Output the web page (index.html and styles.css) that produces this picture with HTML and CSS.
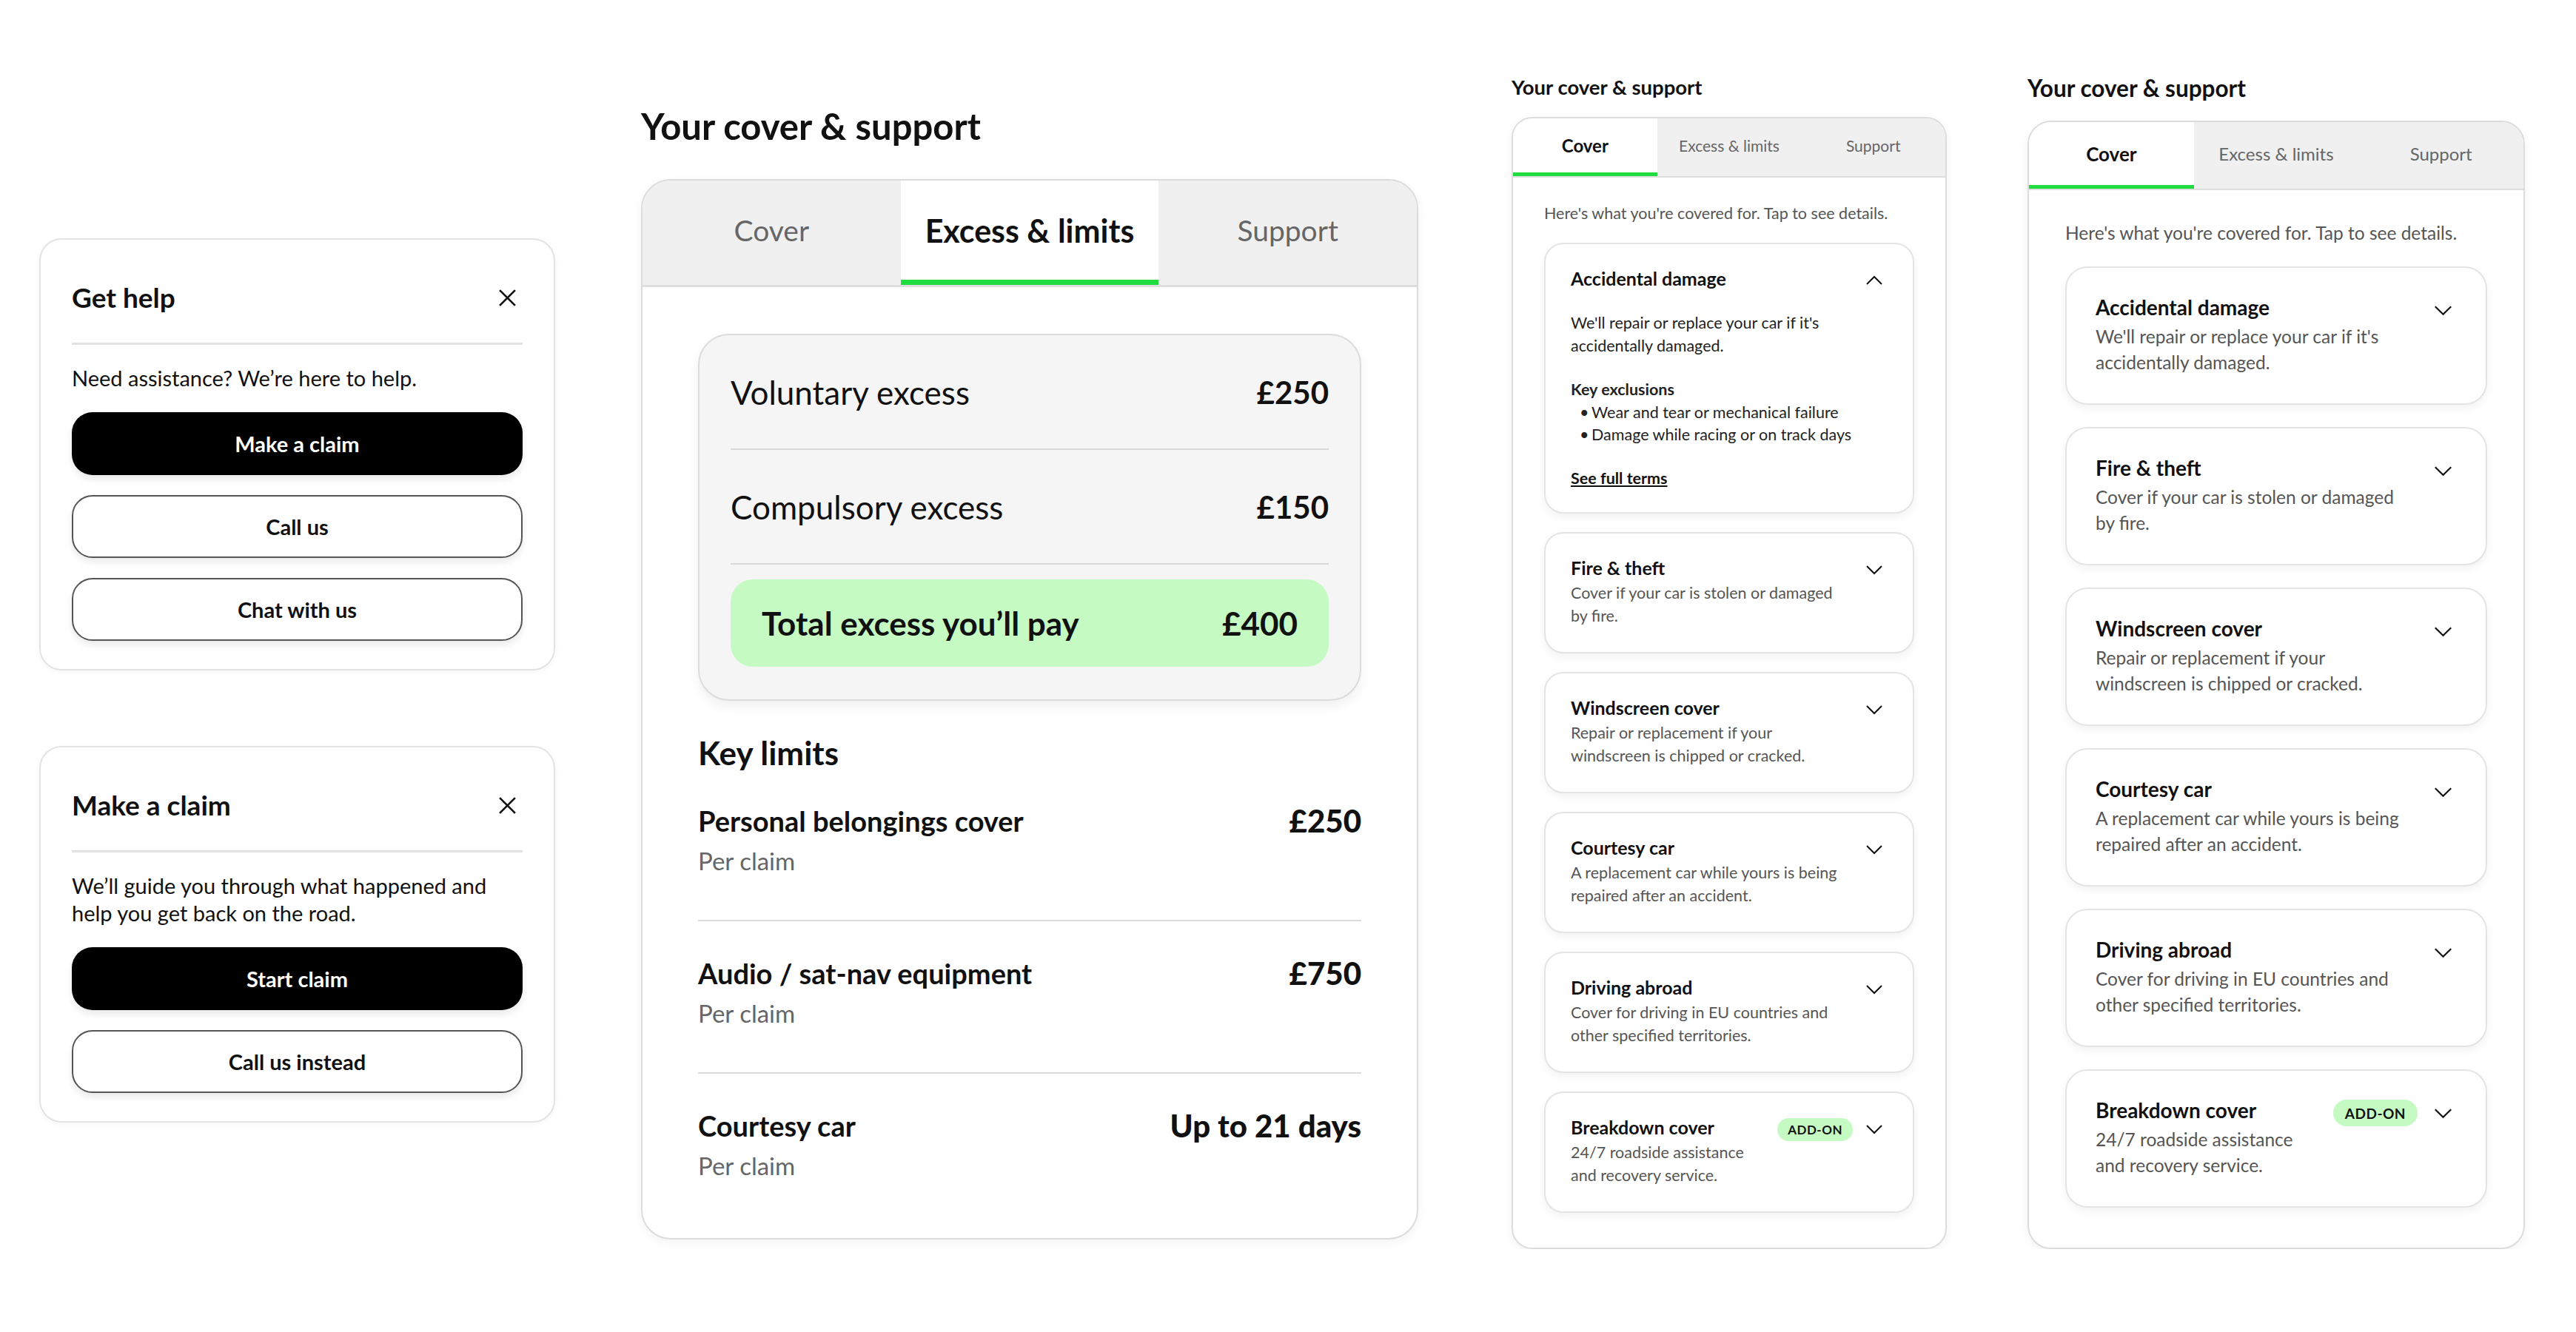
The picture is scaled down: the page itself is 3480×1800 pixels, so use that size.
FILE: index.html
```html
<!DOCTYPE html>
<html lang="en">
<head>
    <meta charset="UTF-8">
    <meta name="viewport" content="width=device-width, initial-scale=1.0">
    <title>Your cover &amp; support</title>
    <link rel="stylesheet" href="styles.css">
</head>
<body>
<div class="board">

    <!-- help sheets -->
    <div class="col-help">
        <div class="sheet">
            <div class="sheet-head">
                <h2 class="sheet-title">Get help</h2>
                <svg class="close" viewBox="0 0 24 24"><path d="M2 2L22 22M22 2L2 22"/></svg>
            </div>
            <p class="sheet-text">Need assistance? We’re here to help.</p>
            <div class="btn btn-dark">Make a claim</div>
            <div class="btn btn-line">Call us</div>
            <div class="btn btn-line">Chat with us</div>
        </div>

        <div class="sheet">
            <div class="sheet-head">
                <h2 class="sheet-title">Make a claim</h2>
                <svg class="close" viewBox="0 0 24 24"><path d="M2 2L22 22M22 2L2 22"/></svg>
            </div>
            <p class="sheet-text">We’ll guide you through what happened and help you get back on the road.</p>
            <div class="btn btn-dark">Start claim</div>
            <div class="btn btn-line">Call us instead</div>
        </div>
    </div>

    <!-- excess & limits, large -->
    <div class="col-main cover-lg">
        <h1 class="page-title">Your cover &amp; support</h1>
        <div class="cover-card">
            <div class="tabs">
                <div class="tab">Cover</div>
                <div class="tab active">Excess &amp; limits</div>
                <div class="tab">Support</div>
            </div>
            <div class="cover-body">
                <div class="excess-box">
                    <div class="excess-row"><span>Voluntary excess</span><b>£250</b></div>
                    <div class="excess-row"><span>Compulsory excess</span><b>£150</b></div>
                    <div class="excess-total"><span>Total excess you’ll pay</span><span>£400</span></div>
                </div>

                <h3 class="limits-title">Key limits</h3>
                <div class="limit-row">
                    <div class="limit-top"><span>Personal belongings cover</span><b>£250</b></div>
                    <div class="limit-sub">Per claim</div>
                </div>
                <div class="limit-row">
                    <div class="limit-top"><span>Audio / sat-nav equipment</span><b>£750</b></div>
                    <div class="limit-sub">Per claim</div>
                </div>
                <div class="limit-row">
                    <div class="limit-top"><span>Courtesy car</span><b>Up to 21 days</b></div>
                    <div class="limit-sub">Per claim</div>
                </div>
            </div>
        </div>
    </div>

    <!-- cover tab, small -->
    <div class="col-sm cover-sm">
        <h1 class="page-title">Your cover &amp; support</h1>
        <div class="cover-card">
            <div class="tabs">
                <div class="tab active">Cover</div>
                <div class="tab">Excess &amp; limits</div>
                <div class="tab">Support</div>
            </div>
            <div class="cover-body">
                <p class="intro">Here's what you're covered for. Tap to see details.</p>
                <div class="items">
                    <div class="item open">
                        <div class="item-main">
                            <div class="item-title">Accidental damage</div>
                        </div>
                        <svg class="chev chev-up" viewBox="0 0 24 14"><path d="M2 12L12 2L22 12"/></svg>
                        <div class="item-body">
                            <p>We'll repair or replace your car if it's accidentally damaged.</p>
                            <div class="excl-title">Key exclusions</div>
                            <ul class="excl-list">
                                <li>Wear and tear or mechanical failure</li>
                                <li>Damage while racing or on track days</li>
                            </ul>
                            <a class="terms" href="#">See full terms</a>
                        </div>
                    </div>
                    <div class="item">
                        <div class="item-main">
                            <div class="item-title">Fire &amp; theft</div>
                            <div class="item-desc">Cover if your car is stolen or damaged by fire.</div>
                        </div>
                        <svg class="chev" viewBox="0 0 24 14"><path d="M2 2L12 12L22 2"/></svg>
                    </div>
                    <div class="item">
                        <div class="item-main">
                            <div class="item-title">Windscreen cover</div>
                            <div class="item-desc">Repair or replacement if your windscreen is chipped or cracked.</div>
                        </div>
                        <svg class="chev" viewBox="0 0 24 14"><path d="M2 2L12 12L22 2"/></svg>
                    </div>
                    <div class="item">
                        <div class="item-main">
                            <div class="item-title">Courtesy car</div>
                            <div class="item-desc">A replacement car while yours is being repaired after an accident.</div>
                        </div>
                        <svg class="chev" viewBox="0 0 24 14"><path d="M2 2L12 12L22 2"/></svg>
                    </div>
                    <div class="item">
                        <div class="item-main">
                            <div class="item-title">Driving abroad</div>
                            <div class="item-desc">Cover for driving in EU countries and other specified territories.</div>
                        </div>
                        <svg class="chev" viewBox="0 0 24 14"><path d="M2 2L12 12L22 2"/></svg>
                    </div>
                    <div class="item">
                        <div class="item-main">
                            <div class="item-title">Breakdown cover</div>
                            <div class="item-desc">24/7 roadside assistance and recovery service.</div>
                        </div>
                        <span class="badge">ADD-ON</span>
                        <svg class="chev" viewBox="0 0 24 14"><path d="M2 2L12 12L22 2"/></svg>
                    </div>
                </div>
            </div>
        </div>
    </div>

    <!-- cover tab, medium -->
    <div class="col-md cover-md">
        <h1 class="page-title">Your cover &amp; support</h1>
        <div class="cover-card">
            <div class="tabs">
                <div class="tab active">Cover</div>
                <div class="tab">Excess &amp; limits</div>
                <div class="tab">Support</div>
            </div>
            <div class="cover-body">
                <p class="intro">Here's what you're covered for. Tap to see details.</p>
                <div class="items">
                    <div class="item">
                        <div class="item-main">
                            <div class="item-title">Accidental damage</div>
                            <div class="item-desc">We'll repair or replace your car if it's accidentally damaged.</div>
                        </div>
                        <svg class="chev" viewBox="0 0 24 14"><path d="M2 2L12 12L22 2"/></svg>
                    </div>
                    <div class="item">
                        <div class="item-main">
                            <div class="item-title">Fire &amp; theft</div>
                            <div class="item-desc">Cover if your car is stolen or damaged by fire.</div>
                        </div>
                        <svg class="chev" viewBox="0 0 24 14"><path d="M2 2L12 12L22 2"/></svg>
                    </div>
                    <div class="item">
                        <div class="item-main">
                            <div class="item-title">Windscreen cover</div>
                            <div class="item-desc">Repair or replacement if your windscreen is chipped or cracked.</div>
                        </div>
                        <svg class="chev" viewBox="0 0 24 14"><path d="M2 2L12 12L22 2"/></svg>
                    </div>
                    <div class="item">
                        <div class="item-main">
                            <div class="item-title">Courtesy car</div>
                            <div class="item-desc">A replacement car while yours is being repaired after an accident.</div>
                        </div>
                        <svg class="chev" viewBox="0 0 24 14"><path d="M2 2L12 12L22 2"/></svg>
                    </div>
                    <div class="item">
                        <div class="item-main">
                            <div class="item-title">Driving abroad</div>
                            <div class="item-desc">Cover for driving in EU countries and other specified territories.</div>
                        </div>
                        <svg class="chev" viewBox="0 0 24 14"><path d="M2 2L12 12L22 2"/></svg>
                    </div>
                    <div class="item">
                        <div class="item-main">
                            <div class="item-title">Breakdown cover</div>
                            <div class="item-desc">24/7 roadside assistance and recovery service.</div>
                        </div>
                        <span class="badge">ADD-ON</span>
                        <svg class="chev" viewBox="0 0 24 14"><path d="M2 2L12 12L22 2"/></svg>
                    </div>
                </div>
            </div>
        </div>
    </div>

</div>
</body>
</html>
```

FILE: styles.css
```css
* {
    box-sizing: border-box;
}
body {
    margin: 0;
    background: #fff;
    color: #111;
    font-family: Lato, "Liberation Sans", Arial, sans-serif;
}
p, h1, h2, h3, ul {
    margin: 0;
}
.board {
    display: flex;
    align-items: flex-start;
    padding-left: 53px;
}

/* columns */
.col-help {
    width: 697px;
    margin-top: 322px;
}
.col-main {
    width: 1050px;
    margin-left: 116px;
    margin-top: 144px;
}
.col-sm {
    width: 588px;
    margin-left: 126px;
    margin-top: 102px;
}
.col-md {
    width: 672px;
    margin-left: 109px;
    margin-top: 102px;
}

/* help sheets */
.sheet {
    border: 2px solid #e3e3e3;
    border-radius: 30px;
    padding: 58px 42px 38px;
    box-shadow: 0 2px 8px rgba(0,0,0,0.04);
}
.sheet + .sheet {
    margin-top: 102px;
}
.sheet-head {
    display: flex;
    justify-content: space-between;
    align-items: center;
    padding-bottom: 41px;
    border-bottom: 3px solid #e2e2e2;
}
.sheet-title {
    font-size: 37px;
    line-height: 40px;
    font-weight: 700;
}
.close {
    width: 25px;
    height: 25px;
    margin-right: 8px;
}
.close path {
    stroke: #111;
    stroke-width: 2.6;
    fill: none;
}
.sheet-text {
    margin: 26px 0 28px;
    font-size: 29px;
    line-height: 37px;
    max-width: 590px;
}
.btn {
    display: flex;
    align-items: center;
    justify-content: center;
    height: 85px;
    border-radius: 28px;
    font-size: 29px;
    font-weight: 700;
    box-shadow: 0 6px 10px rgba(0,0,0,0.08);
}
.btn + .btn {
    margin-top: 27px;
}
.btn-dark {
    background: #000;
    color: #fff;
}
.btn-line {
    background: #fff;
    border: 2px solid #555;
}

/* shared cover card */
.page-title {
    font-weight: 700;
}
.cover-card {
    background: #fff;
    border: 2px solid #dcdcdc;
    overflow: hidden;
    box-shadow: 0 4px 14px rgba(0,0,0,0.05);
}
.tabs {
    display: grid;
    grid-template-columns: repeat(3, 1fr);
    background: #f0f0f0;
    border-bottom: 3px solid #dedede;
}
.tab {
    display: flex;
    align-items: center;
    justify-content: center;
    color: #666;
    border-bottom: 7px solid transparent;
}
.tab.active {
    background: #fff;
    color: #111;
    font-weight: 700;
    border-bottom-color: #20dc40;
}

/* large excess view */
.cover-lg .page-title {
    font-size: 49px;
    line-height: 52px;
    margin-bottom: 46px;
}
.cover-lg .cover-card {
    border-radius: 40px;
}
.cover-lg .tabs {
    height: 144px;
}
.cover-lg .tab {
    font-size: 39px;
}
.cover-lg .tab.active {
    font-size: 43px;
}
.cover-lg .cover-body {
    padding: 63px 75px 18px;
}
.excess-box {
    background: #f5f5f5;
    border: 2px solid #dcdcdc;
    border-radius: 42px;
    padding: 0 42px 44px;
    box-shadow: 0 8px 16px rgba(0,0,0,0.06);
}
.excess-row {
    display: flex;
    justify-content: space-between;
    align-items: center;
    height: 155px;
    border-bottom: 2px solid #d9d9d9;
    font-size: 44px;
}
.excess-row b {
    font-size: 42px;
}
.excess-total {
    display: flex;
    justify-content: space-between;
    align-items: center;
    margin-top: 20px;
    height: 118px;
    padding: 0 42px;
    border-radius: 30px;
    background: #c5fbc3;
    font-size: 44px;
    font-weight: 700;
}
.limits-title {
    margin-top: 48px;
    font-size: 44px;
    line-height: 44px;
    font-weight: 700;
}
.limit-row {
    padding: 48px 0 60px;
    border-bottom: 2px solid #dcdcdc;
}
.limit-row:last-child {
    border-bottom: none;
}
.limit-top {
    display: flex;
    justify-content: space-between;
    align-items: center;
    font-size: 38px;
    line-height: 44px;
    font-weight: 700;
}
.limit-top b {
    font-size: 42px;
}
.limit-sub {
    margin-top: 12px;
    font-size: 33px;
    line-height: 40px;
    color: #666;
}

/* accordion items */
.intro {
    color: #555;
}
.items {
    display: flex;
    flex-direction: column;
}
.item {
    display: flex;
    align-items: flex-start;
    border: 2px solid #e4e4e4;
    background: #fff;
    box-shadow: 0 5px 12px rgba(0,0,0,0.05);
}
.item.open {
    flex-wrap: wrap;
}
.item-main {
    flex: 1;
    margin-right: 32px;
}
.item-title {
    font-weight: 700;
}
.item-desc {
    color: #555;
}
.chev {
    flex-shrink: 0;
}
.chev path {
    fill: none;
    stroke: #111;
    stroke-width: 2;
}
.badge {
    flex-shrink: 0;
    display: flex;
    align-items: center;
    border-radius: 20px;
    background: #c5fbc3;
    font-weight: 700;
    letter-spacing: 0.5px;
}
.item-body {
    flex-basis: 100%;
    color: #222;
}
.excl-title {
    font-weight: 700;
}
.excl-list {
    list-style: none;
    padding: 0;
}
.excl-list li::before {
    content: "•";
    display: inline-block;
    width: 16px;
    margin-left: 12px;
}
.terms {
    display: inline-block;
    color: #111;
    font-weight: 700;
    text-decoration: underline;
}

/* small cover view */
.cover-sm .page-title {
    font-size: 27.5px;
    line-height: 32px;
    margin-bottom: 24px;
}
.cover-sm .cover-card {
    border-radius: 28px;
}
.cover-sm .tabs {
    height: 80px;
    border-bottom-width: 2px;
}
.cover-sm .tab {
    font-size: 21px;
    border-bottom-width: 5px;
}
.cover-sm .tab.active {
    font-size: 24px;
}
.cover-sm .cover-body {
    padding: 34px 42px 47px;
}
.cover-sm .intro {
    font-size: 21.5px;
    line-height: 28px;
    margin-bottom: 26px;
}
.cover-sm .items {
    gap: 25px;
}
.cover-sm .item {
    border-radius: 26px;
    padding: 32px 40px 33px 34px;
}
.cover-sm .item.open {
    padding-bottom: 30px;
}
.cover-sm .item-title {
    font-size: 25px;
    line-height: 28px;
}
.cover-sm .item-desc {
    margin-top: 5px;
    font-size: 21.5px;
    line-height: 31px;
}
.cover-sm .chev {
    width: 24px;
    height: 14px;
    margin-top: 10px;
}
.cover-sm .badge {
    height: 31px;
    padding: 0 14px;
    margin: 2px 17px 0 0;
    font-size: 17px;
}
.cover-sm .item-body {
    margin-top: 31px;
    font-size: 21.5px;
    line-height: 31px;
}
.cover-sm .excl-title {
    margin-top: 28px;
}
.cover-sm .excl-list {
    line-height: 30px;
}
.cover-sm .terms {
    margin-top: 29px;
    line-height: 30px;
}

/* medium cover view */
.cover-md .page-title {
    font-size: 31.5px;
    line-height: 34px;
    margin-bottom: 27px;
}
.cover-md .cover-card {
    border-radius: 32px;
}
.cover-md .tabs {
    height: 92px;
    border-bottom-width: 2px;
}
.cover-md .tab {
    font-size: 24px;
    border-bottom-width: 5px;
}
.cover-md .tab.active {
    font-size: 26px;
}
.cover-md .cover-body {
    padding: 42px 49px 54px;
}
.cover-md .intro {
    font-size: 24.5px;
    line-height: 32px;
    margin-bottom: 29px;
}
.cover-md .items {
    gap: 30px;
}
.cover-md .item {
    border-radius: 30px;
    padding: 37px 44px 38px 39px;
}
.cover-md .item-title {
    font-size: 28px;
    line-height: 32px;
}
.cover-md .item-desc {
    margin-top: 6px;
    font-size: 24.5px;
    line-height: 35px;
}
.cover-md .chev {
    width: 27px;
    height: 15px;
    margin-top: 13px;
}
.cover-md .badge {
    height: 36px;
    padding: 0 16px;
    margin: 2px 21px 0 0;
    font-size: 19px;
}
```
